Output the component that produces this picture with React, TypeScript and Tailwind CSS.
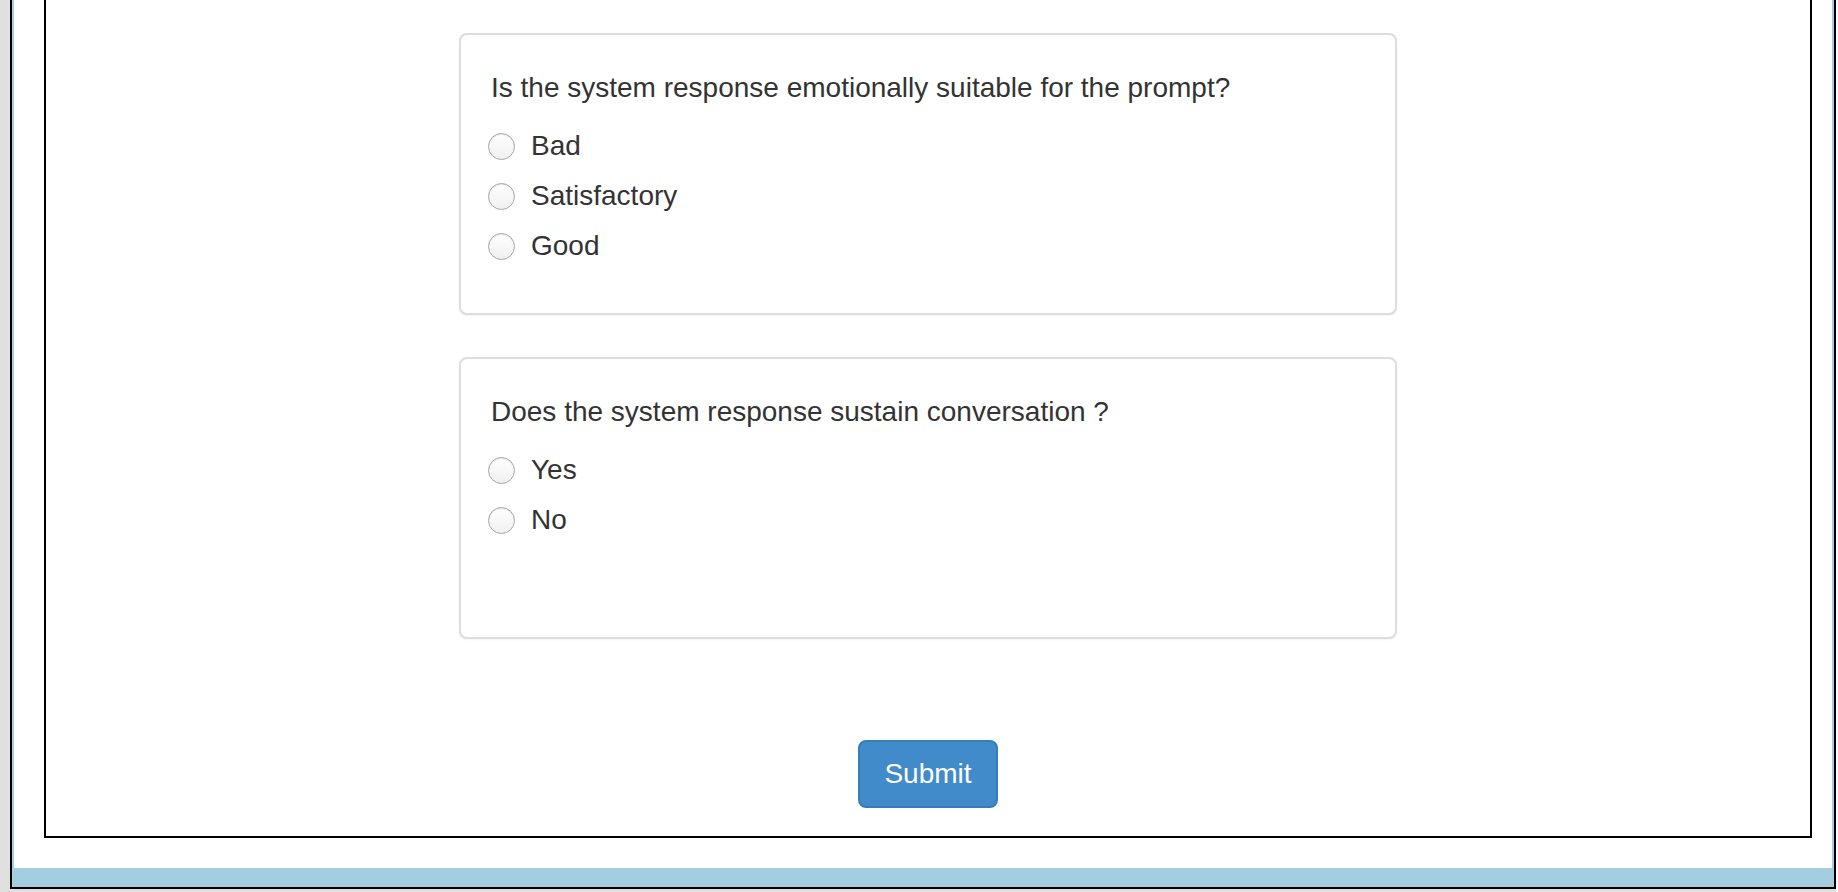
import { useState } from 'react';

type Question = {
  id: string;
  text: string;
  options: string[];
};

const questions: Question[] = [
  {
    id: 'emotion',
    text: 'Is the system response emotionally suitable for the prompt?',
    options: ['Bad', 'Satisfactory', 'Good'],
  },
  {
    id: 'sustain',
    text: 'Does the system response sustain conversation ?',
    options: ['Yes', 'No'],
  },
];

function QuestionPanel({
  q,
  value,
  onChange,
}: {
  q: Question;
  value?: string;
  onChange: (v: string) => void;
}) {
  return (
    <div className="box-border h-[282px] w-[938px] rounded-[8px] border-2 border-[#dddddd] bg-white px-[30px] pt-[33px] shadow-[0_1px_2px_rgba(0,0,0,0.05)]">
      <p className="text-[28px] leading-[40px]">{q.text}</p>
      <div className="mt-[18px] flex flex-col gap-[10px]">
        {q.options.map((opt) => (
          <label key={opt} className="flex h-[40px] cursor-pointer items-center gap-[16px]">
            <input
              type="radio"
              name={q.id}
              checked={value === opt}
              onChange={() => onChange(opt)}
              className="ml-[-3px] h-[27px] w-[27px] shrink-0 appearance-none rounded-full border border-[#a6a6a6] bg-gradient-to-b from-white to-[#f0f0f0] shadow-[inset_0_1px_1px_rgba(0,0,0,0.1)] checked:border-[7px] checked:border-[#3b99fc]"
            />
            <span className="text-[28px] leading-[40px]">{opt}</span>
          </label>
        ))}
      </div>
    </div>
  );
}

export default function App() {
  const [answers, setAnswers] = useState<Record<string, string>>({});

  return (
    <div
      className="flex h-[892px] w-[1838px] overflow-hidden bg-[#e0e0e0] text-[#333333]"
      style={{ fontFamily: '"Liberation Sans", Arial, Helvetica, sans-serif' }}
    >
      <div className="ml-[10px] w-[1826px] self-start border-x-2 border-b-2 border-black bg-[#a3cde1] px-[2px] pb-[19px]">
        <div className="bg-white pb-[30px] pl-[30px] pr-[20px]">
          <div className="flex flex-col items-center border-x-2 border-b-2 border-black pb-[28px] pt-[33px]">
            <div className="flex flex-col gap-[42px]">
              {questions.map((q) => (
                <QuestionPanel
                  key={q.id}
                  q={q}
                  value={answers[q.id]}
                  onChange={(v) => setAnswers((a) => ({ ...a, [q.id]: v }))}
                />
              ))}
            </div>
            <button
              type="button"
              className="mt-[101px] rounded-[8px] border-2 border-[#357ebd] bg-[#428bca] px-[24px] py-[12px] text-[28px] leading-[40px] text-white hover:bg-[#3071a9]"
            >
              Submit
            </button>
          </div>
        </div>
      </div>
      <div className="w-[2px] bg-white" />
    </div>
  );
}
